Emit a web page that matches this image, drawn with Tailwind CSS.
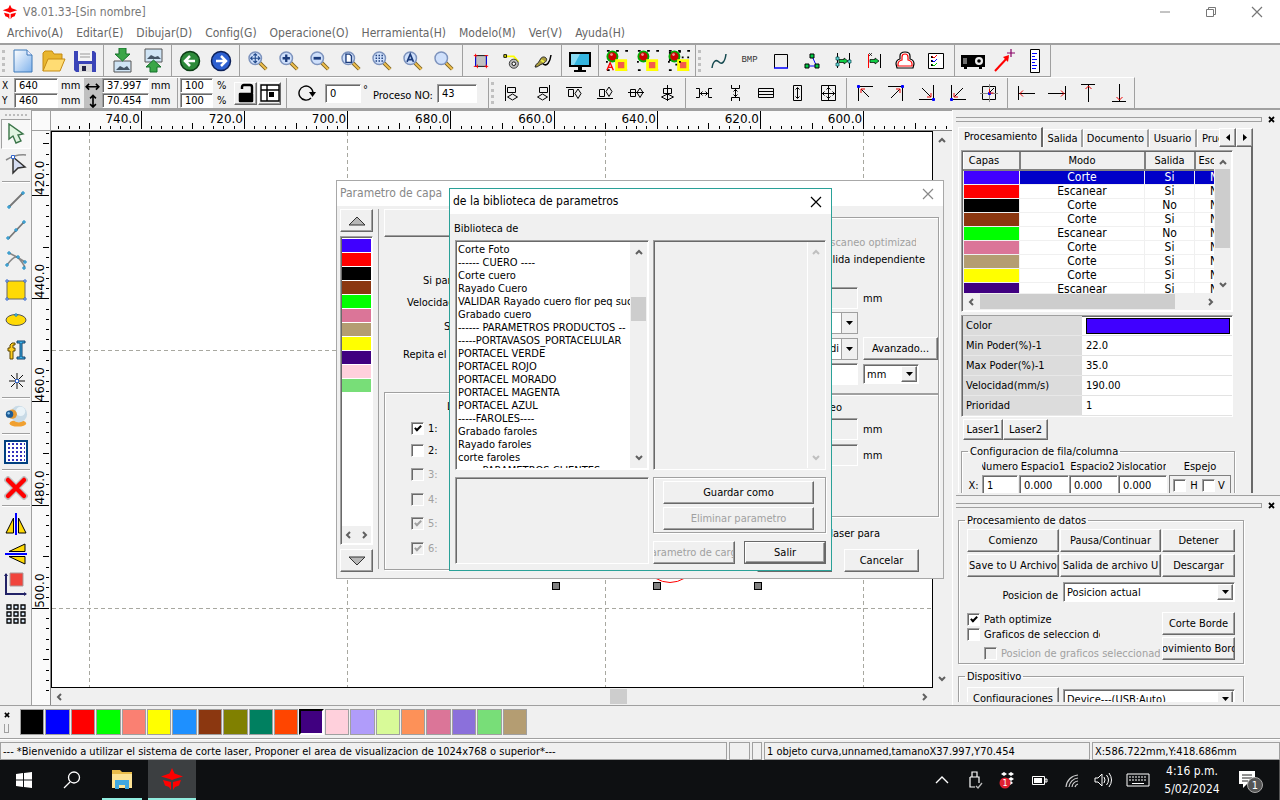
<!DOCTYPE html>
<html lang="es">
<head>
<meta charset="utf-8">
<title>V8.01.33-[Sin nombre]</title>
<script src="https://cdn.jsdelivr.net/npm/@tailwindcss/browser@4"></script>
</head>
<body class="flex h-screen flex-col overflow-hidden bg-[#f0f0f0] font-['DejaVu_Sans_Condensed',Roboto,sans-serif] text-[11px] leading-[13px] text-black">

<svg class="hidden">
  <symbol id="glass" viewBox="0 0 24 24"><path d="M14 14l7 7" stroke="#7d6425" stroke-width="4"/><path d="M14 14l7 7" stroke="#f2c14e" stroke-width="2"/><circle cx="9" cy="9" r="6.8" fill="#cfe0fb" stroke="#7d93bd" stroke-width="1.6"/></symbol>
  <symbol id="up" viewBox="0 0 8 6"><path d="M1 5l3-3 3 3" fill="none" stroke="currentColor" stroke-width="2"/></symbol>
  <symbol id="down" viewBox="0 0 8 6"><path d="M1 1l3 3 3-3" fill="none" stroke="currentColor" stroke-width="2"/></symbol>
  <symbol id="left" viewBox="0 0 6 8"><path d="M5 1L2 4l3 3" fill="none" stroke="currentColor" stroke-width="2"/></symbol>
  <symbol id="right" viewBox="0 0 6 8"><path d="M1 1l3 3-3 3" fill="none" stroke="currentColor" stroke-width="2"/></symbol>
  <symbol id="tri" viewBox="0 0 7 4"><path d="M0 0h7L3.500 4z" fill="#000"/></symbol>
  <symbol id="close" viewBox="0 0 12 12"><path d="M1 1l10 10M11 1L1 11" stroke="currentColor" stroke-width="1.200"/></symbol>
  <symbol id="logo" viewBox="0 0 24 24"><path d="M12 1l2.500 5.500L23 9.500l-8.500 2.500L12 13l-2.500-1L1 9.500l8.500-3z" fill="#f00"/><path d="M3 13l8 2v8l-2-3-4-1.500zM21 13l-8 2v8l2-3 4-1.500z" fill="#f00"/></symbol>
  <symbol id="pick" viewBox="0 0 24 24"><path d="M1 1h3M11 1h3M21 1h3M1 22h3M21 22h2M1 12v2" stroke="#000" stroke-width="2"/><circle cx="7" cy="7" r="5.500" fill="#c00" stroke="#0a0" stroke-width="2"/><circle cx="6" cy="5" r="1.500" fill="#fff" fill-opacity=".6"/><path d="M11.500 11.500h10v10h-10z" fill="#f35b4b" stroke="#ff0" stroke-width="3"/></symbol>
</svg>

<!-- Title bar -->
<header class="flex h-[24px] shrink-0 items-center bg-white pl-[2px] text-[#777]">
  <svg class="size-[16px]"><use href="#logo"/></svg>
  <h1 class="ml-[5px] flex-1 text-[12px]">V8.01.33-[Sin nombre]</h1>
  <button aria-label="Minimizar" class="grid h-full w-[46px] place-items-center"><svg class="size-[12px]" viewBox="0 0 12 12"><path d="M1 6h10" stroke="#888"/></svg></button>
  <button aria-label="Restaurar" class="grid h-full w-[46px] place-items-center"><svg class="size-[12px]" viewBox="0 0 12 12"><path d="M1.500 3.500h7v7h-7zM3.500 3.500v-2h7v7h-2" fill="none" stroke="#777"/></svg></button>
  <button aria-label="Cerrar" class="grid h-full w-[46px] place-items-center"><svg class="size-[12px]"><use href="#close"/></svg></button>
</header>
<nav class="flex h-[19px] shrink-0 items-center gap-[13px] bg-white pl-[7px] text-[12px] text-[#666]">
  <a href="#">Archivo(A)</a><a href="#">Editar(E)</a><a href="#">Dibujar(D)</a><a href="#">Config(G)</a><a href="#">Operacione(O)</a><a href="#">Herramienta(H)</a><a href="#">Modelo(M)</a><a href="#">Ver(V)</a><a href="#">Ayuda(H)</a>
</nav>

<!-- Main toolbar -->
<div class="flex h-[34px] shrink-0 border-t-2 border-[#a0a0a0]">
 <div class="flex items-center border-b border-[#a0a0a0] [&>button]:grid [&>button]:h-full [&>button]:w-[31px] [&>button]:shrink-0 [&>button]:place-items-center">
  <i data-ui="grip"></i>
  <button aria-label="Nuevo"><svg class="size-[24px]" viewBox="0 0 24 24"><defs><linearGradient id="pg" x2="1" y2="1"><stop stop-color="#fff"/><stop offset="1" stop-color="#7fb2ec"/></linearGradient></defs><path d="M3 1h13l5 5v17H3z" fill="url(#pg)" stroke="#3c78b8"/><path d="M16 1v5h5" fill="#eef" stroke="#3c78b8"/></svg></button>
  <button aria-label="Abrir"><svg class="size-[24px]" viewBox="0 0 24 24"><path d="M1 22V4l2-2h7l2 3h8v5" fill="#e9b62f" stroke="#c58b13"/><path d="M1 22l5-12h17l-5 12z" fill="#ffdc73" stroke="#c58b13"/></svg></button>
  <button aria-label="Guardar"><svg class="size-[24px]" viewBox="0 0 24 24"><path d="M1 2h20l2 2v19H3l-2-2z" fill="#3a44b8"/><path d="M5 2h14v10H5z" fill="#f4f4f4"/><path d="M7 5h10M7 8h10" stroke="#999"/><path d="M6 15h13v8H6z" fill="#dcdcdc"/><path d="M9 17h4v5H9z" fill="#224"/></svg></button>
  <i data-ui="sep"></i>
  <button aria-label="Importar"><svg class="size-[26px]" viewBox="0 0 26 26"><path d="M5 13h17v11H5z" fill="#cfe4f5" stroke="#555"/><path d="M7 22l4-4 4 2 3-2 3 4z" fill="#456"/><path d="M10 0h7v6h4l-7.500 7L6 6h4z" fill="#3aa648" stroke="#14702a"/></svg></button>
  <button aria-label="Exportar"><svg class="size-[26px]" viewBox="0 0 26 26"><path d="M5 1h17v13H5z" fill="#cfe4f5" stroke="#555"/><path d="M7 11l4-4 4 2 3-1 3 3z" fill="#456"/><path d="M10 24h7v-5h4l-7.500-7L6 19h4z" fill="#3aa648" stroke="#14702a"/></svg></button>
  <i data-ui="sep"></i>
  <button aria-label="Deshacer"><svg class="size-[22px]" viewBox="0 0 22 22"><circle cx="11" cy="11" r="9.500" fill="#2d8a3a" stroke="#0d3d16" stroke-width="1.500"/><path d="M16 11H6M11 6l-5 5 5 5" fill="none" stroke="#fff" stroke-width="2.500"/></svg></button>
  <button aria-label="Rehacer"><svg class="size-[22px]" viewBox="0 0 22 22"><circle cx="11" cy="11" r="9.500" fill="#2c5fd0" stroke="#0c2058" stroke-width="1.500"/><path d="M6 11h10M11 6l5 5-5 5" fill="none" stroke="#fff" stroke-width="2.500"/></svg></button>
  <i data-ui="sep"></i>
  <button aria-label="Mover vista"><svg class="size-[22px]" viewBox="0 0 24 24"><use href="#glass"/><path d="M9 4v10M4 9h10M7 6l2-2 2 2M7 12l2 2 2-2M6 7L4 9l2 2M12 7l2 2-2 2" fill="none" stroke="#224a8c" stroke-width="1.200"/></svg></button>
  <button aria-label="Acercar"><svg class="size-[22px]" viewBox="0 0 24 24"><use href="#glass"/><path d="M9 5v8M5 9h8" stroke="#1c3c7c" stroke-width="2.500"/></svg></button>
  <button aria-label="Alejar"><svg class="size-[22px]" viewBox="0 0 24 24"><use href="#glass"/><path d="M5 9h8" stroke="#1c3c7c" stroke-width="3"/></svg></button>
  <button aria-label="Ver página"><svg class="size-[22px]" viewBox="0 0 24 24"><use href="#glass"/><path d="M6.500 4.500h4l2 2v7h-6z" fill="#fff" stroke="#1c3c7c" stroke-width="1.500"/></svg></button>
  <button aria-label="Ver datos"><svg class="size-[22px]" viewBox="0 0 24 24"><use href="#glass"/><path d="M5 6h9M5 9h9M5 12h9" stroke="#1c3c7c" stroke-width="1.600" stroke-dasharray="1.600 1.600"/></svg></button>
  <button aria-label="Ver todo"><svg class="size-[22px]" viewBox="0 0 24 24"><use href="#glass"/><path d="M5.500 13L9 4.500l3.500 8.500M7 10.500h4" fill="none" stroke="#1c3c7c" stroke-width="1.800"/></svg></button>
  <button aria-label="Zoom"><svg class="size-[22px]"><use href="#glass"/></svg></button>
  <i data-ui="sep"></i>
  <button aria-label="Marco"><svg class="size-[18px]" viewBox="0 0 20 20"><path d="M4 4h12v12H4z" fill="#c0c0c0" stroke="#000"/><path d="M4 4v12M16 4v12" stroke="#00f"/><path d="M2 4h4M4 2v4M14 4h4M2 16h4M14 16h4M6 14v4M16 14v4" stroke="#f00"/></svg></button>
  <button aria-label="Simular corte"><svg class="size-[20px]" viewBox="0 0 22 22"><path d="M3 6h10l5 6" fill="none" stroke="#ff0" stroke-width="2"/><path d="M2 4h3v3H2z" fill="#dd0" stroke="#000"/><circle cx="13" cy="14" r="5" fill="#bbb" stroke="#333"/><circle cx="13" cy="14" r="2" fill="#fff" stroke="#000"/></svg></button>
  <button aria-label="Pluma"><svg class="size-[20px]" viewBox="0 0 20 20"><path d="M2 16c1-4 4-4 5-7s4-4 6-2-1 5-4 6-4 3-6 3z" fill="#aa9c3c" stroke="#222"/><path d="M10 13c4 3 7-2 8-9" fill="none" stroke="#000" stroke-width="1.500"/><path d="M8 9l3 2" stroke="#ee4" stroke-width="2"/></svg></button>
  <i data-ui="sep"></i>
  <button aria-label="Vista previa"><svg class="size-[24px]" viewBox="0 0 24 24"><path d="M1 3h22v15H1zM10 18h4v3h4v2H6v-2h4z" fill="#000"/><path d="M3 5h18v11H3z" fill="#35b5e0"/><path d="M3 5h9L6 16H3z" fill="#8adcf4"/></svg></button>
  <i data-ui="sep"></i>
  <button aria-label="Selección A"><svg class="size-[22px]" viewBox="0 0 24 24"><use href="#pick"/><path d="M1 22l3.500-8L8 22M2.500 19h4" fill="none" stroke="#f00" stroke-width="1.500"/></svg></button>
  <button aria-label="Selección B"><svg class="size-[22px]"><use href="#pick"/></svg></button>
  <button aria-label="Selección C"><svg class="size-[22px]" viewBox="0 0 24 24"><use href="#pick"/><path d="M1 3h2M12 2h2M1 11h2M12 13h2M15 8h2M21 8h2M8 16h2" stroke="#000" stroke-width="2"/></svg></button>
  <i class="ml-px h-full w-px shrink-0 bg-[#a0a0a0]"></i><i data-ui="grip"></i>
  <button aria-label="Curva suave"><svg class="size-[18px]" viewBox="0 0 18 18"><path d="M2 16c1-7 4-9 7-6s6 0 7-8" fill="none" stroke="#164a50" stroke-width="1.500"/></svg></button>
  <button aria-label="BMP" class="font-['Liberation_Mono',monospace] text-[9px] text-[#333]">BMP</button>
  <button aria-label="Rectángulo"><svg class="size-[18px]" viewBox="0 0 18 18"><path d="M2.500 16V2.500h13V16" fill="none" stroke="#000"/><path d="M2 16h14" stroke="#00f" stroke-width="1.500"/></svg></button>
  <button aria-label="Unir"><svg class="size-[18px]" viewBox="0 0 18 18"><path d="M9 4l4 9M4 14h10" stroke="#00f"/><path d="M7 2h4v4H7zM2 12h4v4H2zM12 12h4v4h-4z" fill="#0c4" stroke="#000"/></svg></button>
  <button aria-label="Desplazar"><svg class="size-[18px]" viewBox="0 0 18 18"><path d="M3.500 1v15M15.500 1v15" stroke="#000"/><path d="M5 7.500h5V6l4 3-4 3v-1.500H5z" fill="#1c4" stroke="#000" stroke-width=".7"/><path d="M2 5h3v3H2zM2 11h3v3H2zM14 8h3v3h-3z" fill="#6dd" stroke="#044" stroke-width=".7"/></svg></button>
  <button aria-label="Origen"><svg class="size-[18px]" viewBox="0 0 18 18"><path d="M3.500 2v14" stroke="#f00"/><path d="M15.500 2v14" stroke="#000"/><path d="M4 1l3 3M7 1L4 4" stroke="#000" stroke-width=".7"/><path d="M5 7.500h5V6l4 3-4 3v-1.500H5z" fill="#1c4" stroke="#000" stroke-width=".7"/></svg></button>
  <button aria-label="Contorno"><svg class="size-[22px]" viewBox="0 0 22 22"><path d="M6 9V6q0-4 5-4t5 4v3q4 1 4 5l-1 4H3l-1-4q0-4 4-5z" fill="#fff" stroke="#000" stroke-width="1.200"/><path d="M8 10V7q0-3 3-3t3 3v3q4 1 4 4v2H4v-2q0-3 4-4z" fill="none" stroke="#f00" stroke-width="1.200"/></svg></button>
  <button aria-label="Lista"><svg class="size-[18px]" viewBox="0 0 18 18"><path d="M1.500 1.500h15v15h-15z" fill="#fff" stroke="#000"/><path d="M4 4h2v2H4zM4 8h2v2H4zM4 12h2v2H4z" fill="#000"/><path d="M5 4l2 2 3-3" stroke="#f00" fill="none"/><path d="M5 8l2 2 3-3" stroke="#00f" fill="none"/><path d="M5 12l2 2 3-3" stroke="#0c0" fill="none"/></svg></button>
  <i data-ui="sep"></i>
  <button aria-label="Proyector"><svg class="size-[24px]" viewBox="0 0 24 24"><path d="M0 6h24v12h-3v2h-3v-2H6v2H3v-2H0z" fill="#000"/><path d="M3 9v6M5 9v6" stroke="#ddd"/><circle cx="18" cy="12" r="4" fill="#eee"/><circle cx="18" cy="12" r="1.800" fill="#000"/></svg></button>
  <button aria-label="Apuntar"><svg class="size-[24px]" viewBox="0 0 24 24"><path d="M3 22L16 8" stroke="#f00" stroke-width="2"/><path d="M11 8l6-2-1 7z" fill="#f00"/><path d="M19 0v8M15 4h8" stroke="#806" stroke-width="1.200"/></svg></button>
  <button aria-label="Regla"><svg class="size-[24px]" viewBox="0 0 24 24"><path d="M7.500 .5h9v23h-9z" fill="#fff" stroke="#000"/><path d="M9 4.500h5M9 7.500h3M9 10.500h5M9 13.500h3M9 16.500h5M9 19.500h4" stroke="#00f"/></svg></button>
  <i class="h-full border-r border-[#a0a0a0]"></i>
 </div>
</div>

<!-- Object toolbar -->
<div class="flex h-[33px] shrink-0 border-b-2 border-[#a0a0a0]">
 <div class="flex items-center border-t border-white border-r border-r-[#a0a0a0] [&>button]:grid [&>button]:h-full [&>button]:w-[31px] [&>button]:shrink-0 [&>button]:place-items-center">
  <div class="grid w-[84px] grid-cols-[14px_44px_1fr] items-center">
   <label for="px" class="pl-[2px] text-[10px]">X</label><input id="px" data-ui="field" class="h-[15px] pl-[4px]" value="640"><span class="pl-[3px]">mm</span>
   <label for="py" class="pl-[2px] text-[10px]">Y</label><input id="py" data-ui="field" class="h-[15px] pl-[4px]" value="460"><span class="pl-[3px]">mm</span>
  </div>
  <svg class="h-[30px] w-[18px] bg-[#c0c0c0]" viewBox="0 0 18 31"><path d="M2 9h13M5 6L2 9l3 3M12 6l3 3-3 3M9 19v10M6 21l3-3 3 3M6 27l3 3 3-3" fill="none" stroke="#000" stroke-width="1.700"/></svg>
  <div class="grid w-[76px] grid-cols-[47px_1fr] items-center border-r border-[#a0a0a0]">
   <input aria-label="Ancho" data-ui="field" class="h-[15px] pl-[4px]" value="37.997"><span class="pl-[2px]">mm</span>
   <input aria-label="Alto" data-ui="field" class="h-[15px] pl-[4px]" value="70.454"><span class="pl-[2px]">mm</span>
  </div>
  <div class="grid w-[56px] grid-cols-[33px_1fr] items-center pl-[2px]">
   <input aria-label="Escala X" data-ui="field" class="h-[15px] pl-[4px]" value="100"><span class="pl-[4px]">%</span>
   <input aria-label="Escala Y" data-ui="field" class="h-[15px] pl-[4px]" value="100"><span class="pl-[4px]">%</span>
  </div>
  <div class="flex w-[52px] gap-px">
   <button aria-label="Bloquear" data-ui="btn" class="size-[23px]"><svg class="size-[20px]" viewBox="0 0 20 20"><path d="M6 6V4q0-2 2-2h6q2 0 2 2v6" fill="none" stroke="#000" stroke-width="2.400"/><path d="M4 11h12v7H4z" fill="#000" stroke="#000" stroke-width="2.500" stroke-linejoin="round"/></svg></button>
   <button aria-label="Ancla" data-ui="btn" class="size-[23px]"><svg class="size-[20px]" viewBox="0 0 20 20"><path d="M1 2h18v16H1zM1 7h18M7 2v16" fill="#fff" stroke="#000" stroke-width="1.400"/><path d="M9 9h5v5H9z" fill="#000"/></svg></button>
  </div>
  <div class="flex h-full items-center border-l border-[#a0a0a0] pr-[11px] pl-[11px]">
   <svg class="mr-[9px] size-[18px]" viewBox="0 0 18 18"><path d="M13 14a7 7 0 1 1 2-5" fill="none" stroke="#000" stroke-width="1.400"/><path d="M11 8h7l-3.500 5z" fill="#000"/></svg>
   <input aria-label="Ángulo" data-ui="field" class="h-[19px] w-[36px] pl-[4px]" value="0"><span class="w-[12px] pl-[2px] pb-[8px]">°</span>
   <label for="proc" class="w-[64px] pt-[4px]">Proceso NO:</label><input id="proc" data-ui="field" class="h-[19px] w-[40px] pl-[4px]" value="43">
  </div>
  <i class="h-full w-px bg-[#a0a0a0]"></i><i data-ui="grip"></i>
  <button aria-label="Alinear izquierda"><svg data-ui="ic" viewBox="0 0 18 18"><path d="M2.500 1v16M4.500 3.500h8v5h-8zM4.500 13l5-3 5 3-5 3z"/></svg></button>
  <button aria-label="Alinear derecha"><svg data-ui="ic" viewBox="0 0 18 18"><path d="M15.500 1v16M5.500 3.500h8v5h-8zM3.500 13l5-3 5 3-5 3z"/></svg></button>
  <button aria-label="Alinear arriba"><svg data-ui="ic" viewBox="0 0 18 18"><path d="M1 3.500h16M3.500 5.500h5v7h-5zM13 5l3 4.500-3 5-3-5z"/></svg></button>
  <button aria-label="Alinear abajo"><svg data-ui="ic" viewBox="0 0 18 18"><path d="M1 14.500h16M3.500 5.500h5v7h-5zM13 3l3 4.500-3 5-3-5z"/></svg></button>
  <button aria-label="Centrar vertical"><svg data-ui="ic" viewBox="0 0 18 18"><path d="M1 8.500h16M3.500 5.500h5v7h-5zM13 4l3 4.500-3 5-3-5z"/></svg></button>
  <button aria-label="Centrar horizontal"><svg data-ui="ic" viewBox="0 0 18 18"><path d="M9.500 1v16M5.500 4.500h8v5h-8zM3.500 13l6-3 6 3-6 3z"/></svg></button>
  <i data-ui="sep"></i>
  <button aria-label="Espaciar horizontal"><svg data-ui="ic" viewBox="0 0 18 18"><path d="M1 4.500h3.500v9H1M17 4.500h-3.500v9H17M5 9.500h8M7.500 7.500l-2 2 2 2M10.500 7.500l2 2-2 2"/></svg></button>
  <button aria-label="Espaciar vertical"><svg data-ui="ic" viewBox="0 0 18 18"><path d="M5.500 1v3.500h8V1M5.500 17v-3.500h8V17M9.500 5v8M7.500 7.500l2-2 2 2M7.500 10.500l2 2 2-2"/></svg></button>
  <button aria-label="Mismo ancho"><svg data-ui="ic" viewBox="0 0 18 18"><path d="M1.500 4.500h15v9h-15zM1.500 7.500h15M1.500 10.500h15"/></svg></button>
  <button aria-label="Mismo alto"><svg data-ui="ic" viewBox="0 0 18 18"><path d="M5.500 1.500h8v15h-8zM9.500 4v10M7.500 5.500l2-2 2 2M7.500 12.500l2 2 2-2"/></svg></button>
  <button aria-label="Mismo tamaño"><svg data-ui="ic" viewBox="0 0 18 18"><path d="M2.500 1.500h14v15h-14zM9.500 2v14M3 9.500h13M7.500 5.500l2-2 2 2M7.500 12.500l2 2 2-2M5.500 7.500l-2 2 2 2M13.500 7.500l2 2-2 2"/></svg></button>
  <i data-ui="sep"></i>
  <button aria-label="Arriba izquierda"><svg data-ui="ic" viewBox="0 0 18 18"><path d="M2.500 17V2.500H17M5 5l8 8"/><path d="M5 9V5h4" stroke="#e00"/><path d="M1.500 1.500h2v2h-2z" fill="#00f" stroke="#00f"/></svg></button>
  <button aria-label="Arriba derecha"><svg data-ui="ic" viewBox="0 0 18 18"><path d="M15.500 17V2.500H1M13 5l-9 9"/><path d="M13 9V5H9" stroke="#e00"/><path d="M14.500 1.500h2v2h-2z" fill="#00f" stroke="#00f"/></svg></button>
  <button aria-label="Abajo derecha"><svg data-ui="ic" viewBox="0 0 18 18"><path d="M15.500 1v14.500H1M4 4l9 9"/><path d="M13 9v4H9" stroke="#e00"/><path d="M14.500 14.500h2v2h-2z" fill="#00f" stroke="#00f"/></svg></button>
  <button aria-label="Abajo izquierda"><svg data-ui="ic" viewBox="0 0 18 18"><path d="M2.500 1v14.500H17M14 4l-9 9"/><path d="M5 9v4h4" stroke="#e00"/><path d="M1.500 14.500h2v2h-2z" fill="#00f" stroke="#00f"/></svg></button>
  <button aria-label="Centro"><svg data-ui="ic" viewBox="0 0 18 18"><path d="M2.500 2.500h13v13h-13zM14 4L9 9"/><path d="M0 9.500h18M9.500 0v18" stroke="#888"/><path d="M8.500 8.500h2v2h-2z" fill="#00f" stroke="#00f"/><path d="M9.500 5v4h4" stroke="#e00"/></svg></button>
  <i data-ui="sep"></i>
  <button aria-label="Mover izquierda"><svg data-ui="ic" viewBox="0 0 18 18"><path d="M1.500 2v14M2 9.500h16"/><path d="M6 6.500l-3 3 3 3" stroke="#e00"/></svg></button>
  <button aria-label="Mover derecha"><svg data-ui="ic" viewBox="0 0 18 18"><path d="M17.500 2v14M0 9.500h17"/><path d="M13 6.500l3 3-3 3" stroke="#e00"/></svg></button>
  <button aria-label="Mover arriba"><svg data-ui="ic" viewBox="0 0 18 18"><path d="M2 .5h14M9.500 1v17"/><path d="M6.500 5l3-3 3 3" stroke="#e00"/></svg></button>
  <button aria-label="Mover abajo"><svg data-ui="ic" viewBox="0 0 18 18"><path d="M2 17.500h14M9.500 0v17"/><path d="M6.500 13l3 3 3-3" stroke="#e00"/></svg></button>
 </div>
</div>

<main class="flex min-h-0 flex-1">
 <!-- Drawing tools -->
 <aside class="flex w-[32px] shrink-0 flex-col items-center border-r border-[#a0a0a0] pt-[4px] [&>button]:grid [&>button]:h-[30px] [&>button]:w-[30px] [&>button]:shrink-0 [&>button]:place-items-center">
  <i class="mb-[3px] h-[2px] w-[22px] border-t-2 border-dotted border-[#bbb]"></i>
  <button aria-label="Seleccionar" class="border border-r-white border-b-white border-t-[#a0a0a0] border-l-[#a0a0a0] bg-[#f8f8f8]"><svg class="size-[22px]" viewBox="0 0 22 22"><path d="M4 1v15l4-3 3 7 5-2-3-6 5-1z" fill="#e0f5e0" stroke="#3a7448" stroke-width="1.400"/></svg></button>
  <button aria-label="Editar nodos"><svg class="size-[24px]" viewBox="0 0 24 24"><path d="M2 8Q12 2 22 3" fill="none" stroke="#888" stroke-width="1.500"/><path d="M9 5v16l5-5 7-1z" fill="#d5ddf2" stroke="#333" stroke-width="1.500"/><path d="M7.500 3.500h3v3h-3z" fill="#fff" stroke="#36c"/></svg></button>
  <i data-ui="hr"></i>
  <button aria-label="Línea"><svg class="size-[22px]" viewBox="0 0 22 22"><path d="M4 18L18 4" stroke="#777" stroke-width="1.800"/><path d="M3 17h2v2H3zM17 3h2v2h-2z" fill="#fff" stroke="#0080c0"/></svg></button>
  <button aria-label="Polilínea"><svg class="size-[22px]" viewBox="0 0 22 22"><path d="M3 20L19 3" stroke="#777" stroke-width="1.800"/><path d="M2 18h2v2H2zM18 2h2v2h-2zM10 10h2v2h-2z" fill="#fff" stroke="#0080c0"/></svg></button>
  <button aria-label="Curva"><svg class="size-[22px]" viewBox="0 0 22 22"><path d="M2 16q6-8 9-8t9 10M4 4l8 4 8 5" fill="none" stroke="#888" stroke-width="1.600"/><path d="M1 15h2v2H1zM3 3h2v2H3zM12 7h2v2h-2zM19 12h2v2h-2zM18 18h2v2h-2z" fill="#fff" stroke="#0080c0"/></svg></button>
  <button aria-label="Rectángulo"><svg class="size-[22px]" viewBox="0 0 22 22"><path d="M2 2h18v18H2z" fill="#ffda06" stroke="#666"/><path d="M1 1h2v2H1zM19 1h2v2h-2zM1 19h2v2H1zM19 19h2v2h-2z" fill="#fff" stroke="#36c"/></svg></button>
  <button aria-label="Elipse"><svg class="size-[22px]" viewBox="0 0 22 22"><ellipse cx="11" cy="11" rx="10" ry="5.500" fill="#ffda06" stroke="#555"/><path d="M10 5h2v2h-2z" fill="#fff" stroke="#0080c0"/></svg></button>
  <button aria-label="Texto"><svg class="size-[24px]" viewBox="0 0 24 24"><path d="M11 5H8L6 7v3H4v3h2v8h3v-8h2v-3H9V7h2z" fill="#ffce20" stroke="#5a4500"/><path d="M13 3h8v2h-3v14h3v2h-8v-2h3V5h-3z" fill="#3bb4ee" stroke="#123e66"/></svg></button>
  <button aria-label="Punto"><svg class="size-[20px]" viewBox="0 0 20 20"><path d="M11 3v16M3 11h16M5 5l12 12M17 5L5 17" stroke="#111"/><path d="M9.500 9.500h3v3h-3z" fill="#fff" stroke="#36c"/></svg></button>
  <i data-ui="hr"></i>
  <button aria-label="Cámara"><svg class="size-[24px]" viewBox="0 0 26 26"><ellipse cx="15" cy="21" rx="9" ry="3.500" fill="#f0a030"/><circle cx="16" cy="11" r="9" fill="#c8dae6"/><circle cx="18" cy="8" r="5" fill="#eaf3f8"/><circle cx="9" cy="11" r="5" fill="#e49a35"/><circle cx="6" cy="11" r="4" fill="#1c5c96"/><circle cx="5" cy="10" r="1.300" fill="#8cc4ec"/></svg></button>
  <i data-ui="hr"></i>
  <button aria-label="Cuadrícula"><svg class="size-[24px]" viewBox="0 0 24 24"><path d="M1 1h22v22H1z" fill="#fff" stroke="#003f80" stroke-width="2"/><path d="M4 4h17M4 8h17M4 12h17M4 16h17M4 20h17" stroke="#33b" stroke-width="2" stroke-dasharray="2 2"/></svg></button>
  <i data-ui="hr"></i>
  <button aria-label="Borrar"><svg class="size-[24px]" viewBox="0 0 24 24"><path d="M4 4l16 16M20 4L4 20" stroke="#c0c0c0" stroke-width="7" stroke-linecap="square"/><path d="M4 4l16 16M20 4L4 20" stroke="#f00" stroke-width="4.500" stroke-linecap="round"/></svg></button>
  <i data-ui="hr"></i>
  <button aria-label="Espejo horizontal"><svg class="size-[24px]" viewBox="0 0 24 24"><path d="M9.500 6v15H2zM14.500 6v15H22z" fill="#ffda06" stroke="#000"/><path d="M12 1v22" stroke="#00f" stroke-width="2"/></svg></button>
  <button aria-label="Espejo vertical"><svg class="size-[24px]" viewBox="0 0 24 24"><path d="M5 9.500h16V2zM5 14.500h16V22z" fill="#ffda06" stroke="#000"/><path d="M1 12h22" stroke="#00f" stroke-width="2"/></svg></button>
  <button aria-label="Mover al origen"><svg class="size-[24px]" viewBox="0 0 24 24"><path d="M6 1h13v13H6z" fill="#f0443c" stroke="#a99"/><path d="M2 2v20h20" fill="none" stroke="#226" stroke-width="2"/><path d="M0 4l2-3 2 3M20 20l3 2-3 2" fill="#226"/></svg></button>
  <button aria-label="Matriz"><svg class="size-[20px]" viewBox="0 0 20 20"><path d="M1 1h4v4H1zM8 1h4v4H8zM15 1h4v4h-4zM1 8h4v4H1zM8 8h4v4H8zM15 8h4v4h-4zM1 15h4v4H1zM8 15h4v4H8zM15 15h4v4h-4z" fill="#d8e8f8" stroke="#000" stroke-width="1.300"/></svg></button>
 </aside>

 <!-- Drawing area with rulers -->
 <section class="grid min-w-0 flex-1 grid-cols-[19px_1fr] grid-rows-[20px_1fr] border-t border-[#a0a0a0]">
  <div class="border-r border-b border-[#a0a0a0] bg-[#fafafa]"></div>
  <svg id="hruler" class="h-[20px] w-full border-b border-[#888] bg-[#fafafa] font-['DejaVu_Sans',sans-serif] text-[12px]"></svg>
  <svg id="vruler" class="h-full w-[19px] border-r border-[#888] bg-[#fafafa] font-['DejaVu_Sans',sans-serif] text-[12px]"></svg>
  <div class="grid min-h-0 min-w-0 grid-cols-[1fr_19px] grid-rows-[1fr_17px]">
   <svg id="canvas" class="h-full w-full border border-black bg-white"></svg>
   <div class="flex flex-col items-center justify-between py-[6px] pr-[2px] text-[#606060]"><svg class="h-[6px] w-[8px]"><use href="#up"/></svg><svg class="h-[6px] w-[8px]"><use href="#down"/></svg></div>
   <div class="flex items-center justify-between px-[5px] text-[#606060]"><svg class="h-[8px] w-[6px]"><use href="#left"/></svg><span class="ml-[252px] h-[15px] w-[17px] bg-[#cdcdcd]"></span><svg class="h-[8px] w-[6px]"><use href="#right"/></svg></div>
   <div></div>
  </div>
 </section>

 <!-- Side panels -->
 <aside class="flex w-[328px] shrink-0 flex-col border-l border-white pl-[3px]">
  <div class="flex h-[17px] shrink-0 items-center gap-[6px] pt-px"><i class="h-[5px] w-[306px] border-y border-r border-[#a0a0a0]"></i><button aria-label="Cerrar panel"><svg class="size-[7px]" viewBox="0 0 7 7"><path d="M1 1l5 5M6 1L1 6" stroke="#000" stroke-width="1.800"/></svg></button></div>
  <div class="flex h-[366px] w-[297px] shrink-0 flex-col overflow-hidden pl-[2px]">
   <div role="tablist" class="flex h-[20px] shrink-0 items-end">
    <button role="tab" class="h-[20px] w-[85px] shrink-0 border-t border-l border-t-white border-l-white border-r-2 border-r-[#696969] pb-[2px] pl-[5px] text-left whitespace-nowrap">Procesamiento</button>
    <button role="tab" data-ui="tab" class="w-[40px]">Salida</button><button role="tab" data-ui="tab" class="w-[66px]">Documento</button><button role="tab" data-ui="tab" class="w-[48px]">Usuario</button><button role="tab" class="h-[18px] w-[22px] overflow-hidden border-t border-l border-white pl-[4px] text-left">Prueba</button>
    <button aria-label="Anterior" data-ui="btn" class="h-[19px] w-[17px]"><svg class="h-[7px] w-[4px]" viewBox="0 0 4 7"><path d="M4 0v7L0 3.500z"/></svg></button><button aria-label="Siguiente" data-ui="btn" class="h-[19px] w-[17px]"><svg class="h-[7px] w-[4px]" viewBox="0 0 4 7"><path d="M0 0v7l4-3.500z"/></svg></button>
   </div>
   <div class="min-h-0 flex-1 overflow-hidden border-l border-r-2 border-l-white border-r-[#696969] pt-[3px] pl-[2px]">
    <div data-ui="inset" class="grid h-[162px] w-[272px] grid-cols-[1fr_17px] grid-rows-[1fr_17px] overflow-hidden p-px">
     <div class="overflow-hidden">
      <table class="w-[281px] table-fixed border-collapse text-center text-[12px]">
       <colgroup><col class="w-[56px]"><col class="w-[125px]"><col class="w-[50px]"><col class="w-[50px]"></colgroup>
       <thead class="text-[11px]"><tr class="h-[18px]"><th data-ui="th" class="pr-[14px]">Capas</th><th data-ui="th">Modo</th><th data-ui="th">Salida</th><th data-ui="th" class="pl-[3px] text-left">Escanear</th></tr></thead>
       <tbody id="layers"></tbody>
      </table>
     </div>
     <div class="flex flex-col items-center bg-[#f0f0f0] pt-[7px] pb-[5px] text-[#606060]"><svg class="h-[6px] w-[8px] shrink-0"><use href="#up"/></svg><span class="mt-[4px] h-[79px] w-[15px] bg-[#cdcdcd]"></span><svg class="mt-auto h-[6px] w-[8px]"><use href="#down"/></svg></div>
     <div class="flex items-center bg-[#f0f0f0] pl-[5px] text-[#606060]"><svg class="h-[8px] w-[6px]"><use href="#left"/></svg><span class="ml-[6px] h-[15px] w-[195px] bg-[#cdcdcd]"></span><svg class="ml-auto h-[8px] w-[6px]"><use href="#right"/></svg></div>
     <div class="bg-[#f0f0f0]"></div>
    </div>
    <div data-ui="inset" class="mt-[3px] w-[272px] pl-px">
     <dl class="grid grid-cols-[119px_1fr] [&>dd]:flex [&>dd]:h-[20px] [&>dd]:items-center [&>dd]:border-b [&>dd]:border-[#e3e3e3] [&>dd]:pl-[4px] [&>dt]:border-b [&>dt]:border-[#e8e8e8] [&>dt]:bg-[#dcdcdc] [&>dt]:pt-[3px] [&>dt]:pl-[3px]">
      <dt>Color</dt><dd><span class="h-[16px] w-[144px] border border-black bg-[#4000ff]"></span></dd>
      <dt>Min Poder(%)-1</dt><dd>22.0</dd><dt>Max Poder(%)-1</dt><dd>35.0</dd><dt>Velocidad(mm/s)</dt><dd>190.00</dd><dt>Prioridad</dt><dd>1</dd>
     </dl>
    </div>
    <div class="mt-[2px] flex pl-[2px]"><button data-ui="btn" class="h-[21px] w-[40px]">Laser1</button><button data-ui="btn" class="h-[21px] w-[45px]">Laser2</button></div>
    <fieldset data-ui="group" class="mt-[5px] h-[60px] w-[274px]"><legend class="ml-[6px] px-[2px]">Configuracion de fila/columna</legend>
     <div class="mt-[2px] grid grid-cols-[20px_36px_50px_49px_49px_1fr] items-center gap-y-[2px] text-center">
      <span></span><label for="f1" class="flex justify-end overflow-hidden">Numero</label><label for="f2">Espacio1</label><label for="f3" class="overflow-hidden">Espacio2</label><label for="f4" class="flex justify-center overflow-hidden">Dislocation</label><span>Espejo</span>
      <span class="pl-[3px]">X:</span><input id="f1" data-ui="field" class="mr-px h-[20px] min-w-0 pl-[4px]" value="1"><input id="f2" data-ui="field" class="mx-px h-[20px] min-w-0 pl-[4px]" value="0.000"><input id="f3" data-ui="field" class="mx-px h-[20px] min-w-0 pl-[4px]" value="0.000"><input id="f4" data-ui="field" class="mx-px h-[20px] min-w-0 pl-[4px]" value="0.000">
      <div class="mx-[3px] flex h-[20px] items-center gap-[3px] border border-[#808080] pl-[3px]"><input id="mh" type="checkbox" data-ui="chk"><label for="mh" class="w-[10px]">H</label><input id="mv" type="checkbox" data-ui="chk"><label for="mv">V</label></div>
     </div>
    </fieldset>
   </div>
  </div>
  <div class="mt-[2px] flex h-[19px] shrink-0 items-center gap-[6px] border-t border-[#a0a0a0]"><i class="h-[5px] w-[306px] border-y border-r border-[#a0a0a0]"></i><button aria-label="Cerrar panel"><svg class="size-[7px]" viewBox="0 0 7 7"><path d="M1 1l5 5M6 1L1 6" stroke="#000" stroke-width="1.800"/></svg></button></div>
  <div class="flex h-[188px] flex-col gap-[6px] overflow-hidden pl-[2px]">
   <fieldset data-ui="group" class="w-[286px] shrink-0 pr-[8px] pb-[3px] pl-[8px]"><legend class="ml-[-2px] px-[2px]">Procesamiento de datos</legend>
    <div class="mt-[2px] grid grid-cols-[92px_101px_73px] gap-x-px gap-y-[2px]">
     <button data-ui="btn" class="h-[23px]">Comienzo</button><button data-ui="btn" class="h-[23px]">Pausa/Continuar</button><button data-ui="btn" class="h-[23px]">Detener</button>
     <button data-ui="btn" class="h-[23px]">Save to U Archivo</button><button data-ui="btn" class="h-[23px]">Salida de archivo U</button><button data-ui="btn" class="h-[23px]">Descargar</button>
    </div>
    <div class="mt-[5px] flex"><label for="pos" class="w-[96px] pt-[7px] pr-[5px] text-right">Posicion de</label><span data-ui="inset" class="flex h-[20px] w-[172px] p-px"><select id="pos" class="min-w-0 flex-1 appearance-none pl-[2px]"><option>Posicion actual</option></select><span data-ui="btn" class="w-[16px]"><svg class="h-[4px] w-[7px]"><use href="#tri"/></svg></span></span></div>
    <div class="mt-[10px] flex">
     <div class="flex w-[195px] flex-col gap-[2px] pt-px">
      <div class="flex items-center gap-[4px]"><input id="po" type="checkbox" checked data-ui="chk"><label for="po">Path optimize</label></div>
      <div class="flex items-center gap-[4px]"><input id="gs" type="checkbox" data-ui="chk"><label for="gs" class="w-[116px] overflow-hidden whitespace-nowrap">Graficos de seleccion de</label></div>
      <div class="mt-[4px] flex items-center gap-[4px] pl-[17px] text-[#a0a0a0]"><input id="pg2" type="checkbox" disabled data-ui="chk" class="bg-[#f0f0f0]"><label for="pg2" class="w-[159px] overflow-hidden whitespace-nowrap">Posicion de graficos seleccionados</label></div>
     </div>
     <div class="flex flex-col gap-[2px]"><button data-ui="btn" class="h-[23px] w-[73px]">Corte Borde</button><button data-ui="btn" class="h-[23px] w-[73px]">Movimiento Borde</button></div>
    </div>
   </fieldset>
   <fieldset data-ui="group" class="h-[50px] w-[286px] shrink-0 pl-[8px]"><legend class="ml-[-2px] px-[2px]">Dispositivo</legend>
    <div class="mt-[4px] flex gap-[4px]"><button data-ui="btn" class="h-[23px] w-[92px]">Configuraciones</button><span data-ui="inset" class="mt-[2px] flex h-[20px] w-[172px] p-px"><select aria-label="Dispositivo" class="min-w-0 flex-1 appearance-none pl-[2px]"><option>Device---(USB:Auto)</option></select><span data-ui="btn" class="w-[16px]"><svg class="h-[4px] w-[7px]"><use href="#tri"/></svg></span></span></div>
   </fieldset>
  </div>
 </aside>
</main>

<!-- Layer colours -->
<div class="flex h-[34px] shrink-0 items-center border-y border-t-[#a0a0a0] border-b-[#a0a0a0]">
 <div class="flex w-[20px] flex-col items-start gap-[6px] pl-[4px]"><svg class="size-[6px]" viewBox="0 0 7 7"><path d="M1 1l5 5M6 1L1 6" stroke="#000" stroke-width="1.800"/></svg><i class="h-[9px] w-[5px] border-x border-b border-[#a0a0a0]"></i></div>
 <div id="palette" class="grid h-[26px] w-[508px] grid-cols-20"></div>
</div>
<footer class="flex h-[21px] shrink-0 items-end gap-[2px] border-t border-white [&>span]:flex [&>span]:h-[18px] [&>span]:items-center [&>span]:border [&>span]:border-[#a0a0a0]">
 <span class="w-[727px] pl-[2px]">--- *Bienvenido a utilizar el sistema de corte laser, Proponer el area de visualizacion de 1024x768 o superior*---</span><span class="w-[21px]"></span><span class="w-[10px]"></span><span class="w-[326px] pl-[2px]">1 objeto curva,unnamed,tamanoX37.997,Y70.454</span><span class="flex-1 pl-[2px]">X:586.722mm,Y:418.686mm</span>
</footer>

<!-- Taskbar -->
<div class="flex h-[40px] shrink-0 items-center bg-[#0e1012] text-white [&>button]:grid [&>button]:h-full [&>button]:shrink-0 [&>button]:place-items-center">
 <button aria-label="Inicio" class="w-[48px]"><svg class="size-[16px]" viewBox="0 0 16 16"><path d="M0 2l7-1v6.500H0zM8 1l8-1v7.500H8zM0 8.500h7V15l-7-1zM8 8.500h8V16l-8-1z" fill="#fff"/></svg></button>
 <button aria-label="Buscar" class="w-[48px]"><svg class="size-[18px]" viewBox="0 0 18 18"><circle cx="11" cy="6.500" r="5.500" fill="none" stroke="#fff" stroke-width="1.300"/><path d="M7 11l-6 6" stroke="#fff" stroke-width="1.300"/></svg></button>
 <button aria-label="Explorador" class="mx-[6px] w-[40px] border-b-2 border-[#91ecdf]"><svg class="size-[22px]" viewBox="0 0 22 22"><path d="M1 2h8l2 2h10v16H1z" fill="#e9bc4a"/><path d="M1 6h20v14H1z" fill="#fde394"/><path d="M4 21v-9h14v9h-4v-4H8v4z" fill="#40a8e0"/></svg></button>
 <button aria-label="Corte laser" class="w-[48px] border-b-2 border-[#91ecdf] bg-[#3c3f41]"><svg class="size-[24px]"><use href="#logo"/></svg></button>
 <div class="ml-auto flex items-center [&>svg]:size-[20px]">
  <svg class="mr-[13px]" viewBox="0 0 20 20"><path d="M4 13l6-6 6 6" fill="none" stroke="#fff" stroke-width="1.400"/></svg>
  <svg class="mr-[12px]" viewBox="0 0 20 20"><path d="M7 7V2h5v5M5 7h9v6M5 7v10h5" fill="none" stroke="#fff" stroke-width="1.200"/><path d="M11 16l2 2 4-5" fill="none" stroke="#bbb" stroke-width="1.300"/></svg>
  <svg class="mr-[12px] text-[9px]" viewBox="0 0 20 20"><path d="M7 2l3 2-3 2-3-2zM14 2l3 2-3 2-3-2zM14 7l3 2-3 2-3-2zM11 13l3-2 2 2-3 2z" fill="#fff"/><circle cx="8" cy="13" r="5.500" fill="#e02030"/><text x="8" y="16" text-anchor="middle" fill="#fff">1</text></svg>
  <svg class="mr-[13px]" viewBox="0 0 20 20"><path d="M3.500 6.500h12v8h-12zM16 9h2v3h-2z" fill="none" stroke="#fff"/><path d="M5 8h8v5H5z" fill="#fff"/></svg>
  <svg class="mr-[11px]" viewBox="0 0 20 20"><path d="M4 17A13 13 0 0 1 16 5M7 17a10 10 0 0 1 9-9M10 17a7 7 0 0 1 6-6M13 17a4 4 0 0 1 3-3" fill="none" stroke="#ccc" stroke-width="1.200"/></svg>
  <svg class="mr-[13px]" viewBox="0 0 20 20"><path d="M2 8h3l4-4v12l-4-4H2z" fill="none" stroke="#fff"/><path d="M11 7q2 3 0 6M13.500 5q4 5 0 10M16 3q5 7 0 14" fill="none" stroke="#fff"/></svg>
  <svg class="mr-[7px] w-[24px]!" viewBox="0 0 24 20"><path d="M1 4h22v12H1z" fill="none" stroke="#fff"/><path d="M3 7h18M3 10h18" stroke="#fff" stroke-dasharray="2 1"/><path d="M6 13.500h12" stroke="#fff"/></svg>
  <div class="mr-[10px] flex w-[70px] flex-col items-center gap-[4px] text-[12px] leading-[14px]"><span>4:16 p.m.</span><span>5/02/2024</span></div>
  <svg class="mr-[16px] size-[26px]!" viewBox="0 0 26 26"><path d="M2 4h16v13h-8l-4 4v-4H2z" fill="#fff"/><path d="M5 8h10M5 11h10M5 14h6" stroke="#222"/><circle cx="18" cy="18" r="7.500" fill="#555" stroke="#aaa"/><text x="18" y="22" text-anchor="middle" fill="#fff">1</text></svg>
  <i class="h-[40px] w-px bg-[#555]"></i>
 </div>
</div>

<!-- Layer parameter window -->
<section aria-label="Parametro de capa" class="absolute top-[180px] left-[336px] flex h-[399px] w-[608px] flex-col border border-[#a8a8a8] bg-[#f0f0f0]">
 <div class="flex h-[25px] shrink-0 items-center justify-between bg-white pr-[9px] pl-[3px] text-[12px] text-[#888]"><h2>Parametro de capa</h2><button aria-label="Cerrar"><svg class="size-[12px]"><use href="#close"/></svg></button></div>
 <div class="flex min-h-0 flex-1 pt-[3px]">
  <div class="flex w-[36px] shrink-0 flex-col gap-[4px] pb-[6px] pl-[3px]">
   <button aria-label="Subir" data-ui="btn" class="h-[23px] shrink-0"><svg class="h-[10px] w-[18px]" viewBox="0 0 18 10"><path d="M9 1l8 8H1z" fill="#b8b8b8" stroke="#333"/></svg></button>
   <div data-ui="inset" class="flex flex-1 flex-col p-px pt-[2px]"><div id="swatches" class="flex-1"></div><div class="flex h-[17px] items-center justify-between bg-[#f0f0f0] px-[3px] text-[#606060]"><svg class="h-[8px] w-[6px]"><use href="#left"/></svg><svg class="h-[8px] w-[6px]"><use href="#right"/></svg></div></div>
   <button aria-label="Bajar" data-ui="btn" class="h-[23px] shrink-0"><svg class="h-[10px] w-[18px]" viewBox="0 0 18 10"><path d="M9 9l8-8H1z" fill="#b8b8b8" stroke="#333"/></svg></button>
  </div>
  <i class="mr-[5px] ml-[5px] mb-[9px] w-px shrink-0 bg-[#a0a0a0]"></i>
  <div class="flex w-[300px] shrink-0 flex-col">
   <button aria-label="Biblioteca" data-ui="btn" class="h-[28px] shrink-0"></button>
   <div class="mt-[32px] ml-[19px] grid grid-rows-[22px_22px_26px_30px] items-center whitespace-nowrap"><span class="pl-[20px]">Si parametro</span><span class="pl-[4px]">Velocidad</span><span class="pl-[41px]">Soplado</span><span>Repita el numero</span></div>
   <div data-ui="group" class="mt-[23px] h-[178px] pl-[26px]">
    <span class="block h-[24px] pt-[7px] pl-[36px]">Laser</span>
    <div class="flex h-[22px] items-center gap-[4px]"><input id="l1" type="checkbox" checked data-ui="chk"><label for="l1">1:</label></div>
    <div class="flex h-[23px] items-center gap-[4px]"><input id="l2" type="checkbox" data-ui="chk"><label for="l2">2:</label></div>
    <div class="flex h-[25px] items-center gap-[4px] text-[#a0a0a0]"><input id="l3" type="checkbox" disabled data-ui="chk" class="bg-[#f0f0f0]"><label for="l3">3:</label></div>
    <div class="flex h-[24px] items-center gap-[4px] text-[#a0a0a0]"><input id="l4" type="checkbox" disabled data-ui="chk" class="bg-[#f0f0f0]"><label for="l4">4:</label></div>
    <div class="flex h-[25px] items-center gap-[4px] text-[#a0a0a0]"><input id="l5" type="checkbox" checked disabled data-ui="chk" class="bg-[#f0f0f0]"><label for="l5">5:</label></div>
    <div class="flex h-[24px] items-center gap-[4px] text-[#a0a0a0]"><input id="l6" type="checkbox" checked disabled data-ui="chk" class="bg-[#f0f0f0]"><label for="l6">6:</label></div>
   </div>
  </div>
  <div class="flex min-w-0 flex-1 flex-col pt-[8px] pr-[4px]">
   <div data-ui="group" class="h-[177px] shrink-0 pt-[18px]">
    <div class="flex h-[17px] justify-end pr-[22px] text-[#a0a0a0]"><span class="w-[92px] overflow-hidden whitespace-nowrap">Escaneo optimizado</span></div>
    <div class="flex h-[34px] justify-end pr-[13px]"><span>Salida independiente</span></div>
    <div class="flex justify-end">
     <div class="grid w-[200px] grid-cols-[120px_1fr] items-center gap-x-[5px] gap-y-[3px]">
      <input aria-label="Intervalo" disabled data-ui="field" class="h-[22px] bg-[#f0f0f0]"><span>mm</span>
      <span class="flex h-[22px] border border-[#a0a0a0] bg-white"><select aria-label="Modo" class="min-w-0 flex-1 appearance-none"><option></option></select><span class="grid w-[16px] place-items-center border-l border-[#a0a0a0] bg-[#f0f0f0]"><svg class="h-[4px] w-[7px]"><use href="#tri"/></svg></span></span><span></span>
      <span class="flex h-[22px] border border-[#a0a0a0] bg-white"><select aria-label="Habilitar" class="min-w-0 flex-1 appearance-none pr-[2px] text-right"><option>di</option></select><span class="grid w-[16px] place-items-center border-l border-[#a0a0a0] bg-[#f0f0f0]"><svg class="h-[4px] w-[7px]"><use href="#tri"/></svg></span></span><button data-ui="btn" class="h-[23px]">Avanzado...</button>
      <input aria-label="Valor" data-ui="field" class="h-[22px]"><span data-ui="inset" class="flex h-[20px] w-[56px] p-px"><select aria-label="Unidad" class="min-w-0 flex-1 appearance-none pl-[2px]"><option>mm</option></select><span data-ui="btn" class="w-[16px]"><svg class="h-[4px] w-[7px]"><use href="#tri"/></svg></span></span>
     </div>
    </div>
   </div>
   <div data-ui="group" class="h-[123px] shrink-0 pt-[6px]">
    <div class="flex h-[17px] justify-end pr-[96px]">Soplado de escaneo</div>
    <div class="flex justify-end"><div class="grid w-[200px] grid-cols-[120px_1fr] items-center gap-x-[5px] gap-y-[4px]"><input aria-label="Inicio" disabled data-ui="field" class="h-[22px] bg-[#f0f0f0]"><span>mm</span><input aria-label="Fin" disabled data-ui="field" class="h-[22px] bg-[#f0f0f0]"><span>mm</span></div></div>
   </div>
   <div class="flex h-[32px] shrink-0 items-center justify-end pr-[59px]">laser para</div>
   <div class="flex justify-end gap-[12px] pr-[20px]"><button data-ui="btn" class="h-[23px] w-[75px]">Aceptar</button><button data-ui="btn" class="h-[23px] w-[75px]">Cancelar</button></div>
  </div>
 </div>
</section>

<!-- Parameter library window -->
<section aria-label="Biblioteca de parametros" class="absolute top-[188px] left-[449px] flex h-[383px] w-[383px] flex-col border border-[#2aa198] bg-[#f0f0f0]">
 <div class="flex h-[25px] shrink-0 items-center justify-between bg-white pr-[9px] pl-[3px] text-[12px]"><h2>de la biblioteca de parametros</h2><button aria-label="Cerrar"><svg class="size-[12px]"><use href="#close"/></svg></button></div>
 <label class="h-[26px] pt-[8px] pl-[4px]">Biblioteca de</label>
 <div class="grid grid-cols-[194px_173px] grid-rows-[230px_87px] gap-x-[4px] gap-y-[7px] pl-[5px]">
  <div data-ui="inset" class="flex overflow-hidden p-px">
   <ul class="min-w-0 flex-1 overflow-hidden pt-px pl-px whitespace-pre"><li>Corte Foto</li><li>------ CUERO ----</li><li>Corte cuero</li><li>Rayado Cuero</li><li>VALIDAR Rayado cuero flor peq suc</li><li>Grabado cuero</li><li>------ PARAMETROS PRODUCTOS --</li><li>-----PORTAVASOS_PORTACELULAR</li><li>PORTACEL VERDE</li><li>PORTACEL ROJO</li><li>PORTACEL MORADO</li><li>PORTACEL MAGENTA</li><li>PORTACEL AZUL</li><li>-----FAROLES----</li><li>Grabado faroles</li><li>Rayado faroles</li><li>corte faroles</li><li>------ PARAMETROS CLIENTES</li></ul>
   <div class="flex w-[17px] flex-col items-center bg-[#f0f0f0] py-[7px] text-[#606060]"><svg class="h-[6px] w-[8px]"><use href="#up"/></svg><span class="mt-[42px] h-[24px] w-[15px] bg-[#cdcdcd]"></span><svg class="mt-auto h-[6px] w-[8px]"><use href="#down"/></svg></div>
  </div>
  <div data-ui="inset" class="flex justify-end bg-[#f0f0f0] p-px"><div class="flex w-[17px] flex-col items-center justify-between border-l border-white py-[7px] text-[#bfbfbf]"><svg class="h-[6px] w-[8px]"><use href="#up"/></svg><svg class="h-[6px] w-[8px]"><use href="#down"/></svg></div></div>
  <div data-ui="inset" class="bg-[#f0f0f0]"></div>
  <div class="flex flex-col justify-between">
   <div data-ui="group" class="flex h-[56px] flex-col gap-[3px] px-[9px] pt-[3px]"><button data-ui="btn" class="h-[23px] w-[151px]">Guardar como</button><button disabled data-ui="btn" class="h-[23px] w-[151px] text-[#a0a0a0]">Eliminar parametro</button></div>
   <div class="flex justify-between"><button disabled data-ui="btn" class="h-[23px] w-[82px] text-[#a0a0a0]">Parametro de carga</button><span class="border border-[#696969]"><button data-ui="btn" class="h-[21px] w-[80px]">Salir</button></span></div>
  </div>
 </div>
</section>

<script>
// Shared class sets for the classic bevelled controls
const UI = {
  btn: "flex shrink-0 items-center justify-center overflow-hidden whitespace-nowrap border border-t-white border-l-white border-r-[#696969] border-b-[#696969] shadow-[inset_-1px_-1px_0_#a0a0a0] bg-[#f0f0f0]",
  inset: "border border-t-[#a0a0a0] border-l-[#a0a0a0] border-r-white border-b-white shadow-[inset_1px_1px_0_#696969]",
  field: "w-full min-w-0 border border-t-[#a0a0a0] border-l-[#a0a0a0] border-r-white border-b-white shadow-[inset_1px_1px_0_#696969]",
  group: "border border-[#a0a0a0] shadow-[1px_1px_0_white,inset_1px_1px_0_white]",
  sep: "flex h-full w-[6px] shrink-0 justify-center before:w-px before:bg-[#a0a0a0]",
  hr: "my-[2px] h-[2px] w-[28px] shrink-0 border-t border-b border-t-[#a0a0a0] border-b-white",
  grip: "ml-[2px] mr-[2px] h-[22px] w-[3px] shrink-0 border-l-3 border-dotted border-[#c0c0c0]",
  tab: "h-[18px] shrink-0 border-t border-l border-t-white border-l-white border-r-2 border-r-[#a0a0a0]",
  th: "overflow-hidden border-r-2 border-b-2 border-[#808080] bg-[#f0f0f0] font-normal",
  ic: "size-[18px] fill-none stroke-black",
  chk: "grid size-[13px] shrink-0 appearance-none place-items-center border border-t-[#a0a0a0] border-l-[#a0a0a0] border-r-white border-b-white shadow-[inset_1px_1px_0_#696969] before:mb-[2px] before:hidden before:h-[7px] before:w-[4px] before:rotate-45 before:border-r-2 before:border-b-2 before:border-black checked:before:block disabled:before:border-[#a0a0a0]"
};
document.querySelectorAll('[data-ui]').forEach(el => {
  const own = el.getAttribute('class') || '';
  let set = UI[el.dataset.ui];
  if (own.includes('w-[')) set = set.replace('w-full ', '');
  if (/^(inset|field|chk)$/.test(el.dataset.ui) && !own.includes('bg-')) set += ' bg-white';
  el.setAttribute('class', set + ' ' + own);
});

const layers = [['#4000ff','Corte','Si'],['#ff0000','Escanear','Si'],['#000000','Corte','No'],['#8b3710','Corte','Si'],['#00ff00','Escanear','No'],['#db7598','Corte','Si'],['#b49d72','Corte','Si'],['#ffff00','Corte','Si'],['#400080','Escanear','Si'],['#ffd0dc','Corte','Si'],['#78de78','Corte','Si']];
document.getElementById('layers').innerHTML = layers.slice(0, 9).map(([c, m, s], i) => {
  const cell = i ? 'border border-[#f0f0f0] py-0' : 'border border-[#f0f0f0] bg-[#0000c8] py-0 text-white';
  return `<tr class="h-[14px]"><td class="border border-[#f0f0f0]" style="background:${c}"></td><td class="${cell}">${m}</td><td class="${cell}">${s}</td><td class="${cell} pl-[15px] text-left">No</td></tr>`;
}).join('');
document.getElementById('swatches').innerHTML = layers.map(([c]) => `<div class="h-[14px] border-b border-white" style="background:${c}"></div>`).join('');

const colours = ['#000000','#0000ff','#ff0000','#00ff00','#fa8072','#ffff00','#1e90ff','#8b3710','#808000','#008060','#ff4500','#400080','#ffd0dc','#b09cfa','#d8fa98','#fd9158','#db7598','#8b70db','#78de78','#b49d72'];
document.getElementById('palette').innerHTML = colours.map((c, i) => `<button aria-label="Capa ${i + 1}" class="${i === 11 ? 'border-2 border-black border-r-white border-b-white' : 'border border-[#a0a0a0]'} mr-px" style="background:${c}"></button>`).join('');

// Rulers: 20 mm per major division, ten minor ticks each
const step = 10.32;
let h = '', v = '';
for (let k = -8; k < 80; k++) {
  const x = 89.8 + k * step, big = k % 10 === 0, mid = k % 5 === 0;
  h += `<path stroke="#000" d="M${Math.round(x)}.5 18V${big ? 0 : mid ? 12 : 15}"/>`;
  if (big) h += `<text x="${x - 1}" y="12" text-anchor="end">${740 - 2 * k}.0</text>`;
}
for (let k = -6; k < 49; k++) {
  const y = 64 + k * step, big = k % 10 === 0, mid = k % 5 === 0;
  v += `<path stroke="#000" d="M17 ${Math.round(y)}.5H${big ? 0 : mid ? 11 : 14}"/>`;
  if (big) v += `<text transform="translate(12 ${y}) rotate(-90)">${420 + 2 * k}.0</text>`;
}
document.getElementById('hruler').innerHTML = h;
document.getElementById('vruler').innerHTML = v;
document.getElementById('canvas').innerHTML =
  '<path d="M37.500 0V560M295.500 0V560M553.500 0V560M811.500 0V560M0 218.500H900M0 476.500H900" stroke="#a8a8a0" stroke-dasharray="4 3" fill="none"/>' +
  '<path d="M603 446q15 9 30 0" fill="none" stroke="#f00"/>' +
  [500, 601, 702].map(x => `<rect x="${x + .5}" y="450.5" width="7" height="7" fill="#808080" stroke="#000"/>`).join('');
</script>
</body>
</html>
